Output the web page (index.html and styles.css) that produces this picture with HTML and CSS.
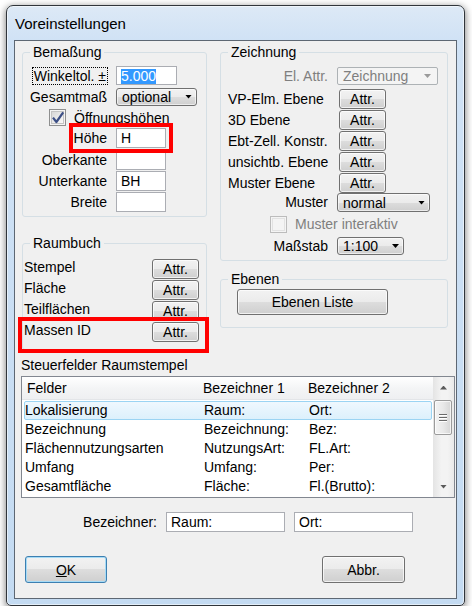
FILE: index.html
```html
<!DOCTYPE html>
<html lang="de">
<head>
<meta charset="utf-8">
<title>Voreinstellungen</title>
<link rel="stylesheet" href="styles.css">
</head>
<body>
<div class="window">
  <div class="titlebar">Voreinstellungen</div>
  <div class="client">
    <div class="top">
      <div class="col">
        <section class="group g-bem">
          <span class="gtitle">Bemaßung</span>
          <div class="row r21">
            <span class="lbl lbl-focus"><span class="focus">Winkeltol. ±</span></span>
            <div class="input w61 h19"><span class="selected">5.000</span></div>
          </div>
          <div class="row r21">
            <span class="lbl">Gesamtmaß</span>
            <div class="combo w81 h18"><span>optional</span><i class="arrow"></i></div>
          </div>
          <div class="row r21 chk-row">
            <svg class="chk" width="17" height="17" viewBox="0 0 17 17">
              <defs><linearGradient id="cg" x1="0" y1="0" x2="1" y2="1"><stop offset="0" stop-color="#d6d6d6"/><stop offset="1" stop-color="#fafafa"/></linearGradient></defs>
              <rect x="0.5" y="0.5" width="16" height="16" fill="#f4f4f4" stroke="#8e8f8f"/>
              <rect x="2.5" y="2.5" width="12" height="12" fill="url(#cg)" stroke="#c4c4c4"/>
              <path d="M4 8.6 L7.4 13 L14.2 3.4" fill="none" stroke="#3c4f86" stroke-width="2.2" stroke-linejoin="round"/>
            </svg>
            <span class="chk-lbl">Öffnungshöhen</span>
          </div>
          <div class="row r-in mark mark-hoehe">
            <span class="lbl">Höhe</span>
            <div class="input w50">H</div>
          </div>
          <div class="row r-in m2">
            <span class="lbl">Oberkante</span>
            <div class="input w50"></div>
          </div>
          <div class="row r-in m1">
            <span class="lbl">Unterkante</span>
            <div class="input w50">BH</div>
          </div>
          <div class="row r-in m1">
            <span class="lbl">Breite</span>
            <div class="input w50"></div>
          </div>
        </section>
        <section class="group g-raum">
          <span class="gtitle">Raumbuch</span>
          <div class="rrow"><span class="rlbl">Stempel</span><button class="btn attr">Attr.</button></div>
          <div class="rrow"><span class="rlbl">Fläche</span><button class="btn attr">Attr.</button></div>
          <div class="rrow"><span class="rlbl">Teilflächen</span><button class="btn attr">Attr.</button></div>
          <div class="rrow mark mark-massen"><span class="rlbl">Massen ID</span><button class="btn attr">Attr.</button></div>
        </section>
      </div>
      <div class="col">
        <section class="group g-zei">
          <span class="gtitle">Zeichnung</span>
          <div class="zrow z1">
            <span class="zlbl right dis">El. Attr.</span>
            <div class="combo disabled w101 h18"><span>Zeichnung</span><i class="arrow"></i></div>
          </div>
          <div class="zrow z21"><span class="zlbl">VP-Elm. Ebene</span><button class="btn attr zb">Attr.</button></div>
          <div class="zrow z21"><span class="zlbl">3D Ebene</span><button class="btn attr zb">Attr.</button></div>
          <div class="zrow z21"><span class="zlbl">Ebt-Zell. Konstr.</span><button class="btn attr zb">Attr.</button></div>
          <div class="zrow z21"><span class="zlbl">unsichtb. Ebene</span><button class="btn attr zb">Attr.</button></div>
          <div class="zrow z21"><span class="zlbl">Muster Ebene</span><button class="btn attr zb">Attr.</button></div>
          <div class="zrow z7">
            <span class="zlbl right">Muster</span>
            <div class="combo w93 h19"><span>normal</span><i class="arrow"></i></div>
          </div>
          <div class="zrow z8">
            <svg class="chk2" width="17" height="17" viewBox="0 0 17 17">
              <rect x="0.5" y="0.5" width="16" height="16" fill="#f4f4f4" stroke="#bcbcbc"/>
              <rect x="2.5" y="2.5" width="12" height="12" fill="#f4f4f4" stroke="#e2e2e2"/>
            </svg>
            <span class="chk-lbl dis">Muster interaktiv</span>
          </div>
          <div class="zrow z9">
            <span class="zlbl right">Maßstab</span>
            <div class="combo w67 h18"><span>1:100</span><i class="arrow"></i></div>
          </div>
        </section>
        <section class="group g-ebe">
          <span class="gtitle">Ebenen</span>
          <button class="btn ebenen">Ebenen Liste</button>
        </section>
      </div>
    </div>

    <div class="list-label">Steuerfelder Raumstempel</div>
    <div class="list">
      <div class="lv">
        <div class="lv-head"><span class="h1">Felder</span><span class="h2">Bezeichner 1</span><span class="h3">Bezeichner 2</span></div>
        <div class="lv-body">
          <div class="lv-row sel"><span class="c1">Lokalisierung</span><span class="c2">Raum:</span><span class="c3">Ort:</span></div>
          <div class="lv-row"><span class="c1">Bezeichnung</span><span class="c2">Bezeichnung:</span><span class="c3">Bez:</span></div>
          <div class="lv-row"><span class="c1">Flächennutzungsarten</span><span class="c2">NutzungsArt:</span><span class="c3">FL.Art:</span></div>
          <div class="lv-row"><span class="c1">Umfang</span><span class="c2">Umfang:</span><span class="c3">Per:</span></div>
          <div class="lv-row"><span class="c1">Gesamtfläche</span><span class="c2">Fläche:</span><span class="c3">Fl.(Brutto):</span></div>
        </div>
      </div>
      <div class="vscroll">
        <div class="sb-btn"><i class="sb-up"></i></div>
        <div class="sb-track">
          <div class="sb-thumb"><i></i><i></i><i></i></div>
        </div>
        <div class="sb-btn"><i class="sb-down"></i></div>
      </div>
    </div>

    <div class="bez">
      <span class="bez-lbl">Bezeichner:</span>
      <div class="input w119">Raum:</div>
      <div class="input w119 ort">Ort:</div>
    </div>

    <div class="dlg-buttons">
      <button class="btn default"><span class="ul">O</span>K</button>
      <button class="btn cancel">Abbr.</button>
    </div>
  </div>
</div>
</body>
</html>
```

FILE: styles.css
```css
html, body {
  margin: 0;
  padding: 0;
  background: #ffffff;
}

body {
  font-family: "Liberation Sans", Arial, sans-serif;
  font-size: 14px;
  color: #000;
}

.window {
  margin: 5px 0 0 6px;
  width: 459px;
  height: 601px;
  box-sizing: border-box;
  border: 1px solid #30353b;
  border-radius: 7px 7px 5px 5px;
  padding: 0 7px 6px 7px;
  background: linear-gradient(180deg, #dde9f6 0%, #d0e2f5 34px, #c4dbf2 100%);
  box-shadow: 0 2px 7px 1px rgba(0, 0, 0, 0.45), inset 0 0 0 1px rgba(255, 255, 255, 0.55);
  display: flex;
  flex-direction: column;
}

.titlebar {
  height: 34px;
  box-sizing: border-box;
  padding: 8px 0 0 1px;
  font-size: 15px;
  line-height: 20px;
}

.client {
  width: 443px;
  height: 559px;
  box-sizing: border-box;
  border: 1px solid #5d6773;
  background: #f0f0f0;
}

/* top area */
.top {
  display: grid;
  grid-template-columns: 185px 228px;
  column-gap: 13px;
  margin: 11px 0 0 7px;
  align-items: start;
}

.col {
  display: flex;
  flex-direction: column;
}

.group {
  position: relative;
  box-sizing: border-box;
  border: 1px solid #d5dfe5;
  border-radius: 3px;
}

.gtitle {
  position: absolute;
  top: -9px;
  left: 7px;
  padding: 0 3px;
  line-height: 16px;
  background: #f0f0f0;
}

.g-bem {
  height: 165px;
  padding-top: 12px;
}

.g-raum {
  height: 107px;
  margin-top: 26px;
  padding-top: 15px;
}

.g-zei {
  height: 209px;
  padding-top: 12px;
}

.g-ebe {
  height: 49px;
  margin-top: 18px;
  padding: 9px 0 0 16px;
}

/* Bemaßung rows */
.row {
  position: relative;
  display: flex;
  align-items: center;
}

.r21 { height: 21px; }
.r-in { height: 20px; }
.m1 { margin-top: 1px; }
.m2 { margin-top: 2px; }

.lbl {
  width: 85px;
  box-sizing: border-box;
  padding-right: 1px;
  margin-right: 8px;
  text-align: right;
  white-space: nowrap;
  line-height: 16px;
}

.lbl-focus {
  padding-right: 0;
}

.focus {
  display: inline-block;
  border: 1px dotted #000;
  padding: 0 1px;
  line-height: 16px;
}

.input {
  box-sizing: border-box;
  height: 20px;
  border: 1px solid #abadb3;
  background: #fff;
  padding: 0 4px;
  line-height: 18px;
  white-space: nowrap;
  overflow: hidden;
}

.h19 { height: 19px; line-height: 17px; }
.w50 { width: 50px; }
.w61 { width: 61px; }
.w119 { width: 119px; }

.selected {
  display: inline-block;
  background: #3399ff;
  color: #fff;
  line-height: 15px;
  vertical-align: middle;
}

.chk-row .chk {
  margin-left: 26px;
  flex: none;
}

.chk-lbl {
  margin-left: 8px;
  line-height: 16px;
  white-space: nowrap;
}

.dis {
  color: #7f7f7f;
}

/* combos */
.combo {
  display: flex;
  align-items: center;
  justify-content: space-between;
  box-sizing: border-box;
  border: 1px solid #707070;
  border-radius: 3px;
  background: linear-gradient(180deg, #f2f2f2 0%, #ebebeb 50%, #dddddd 50%, #cfcfcf 100%);
  box-shadow: inset 0 0 0 1px rgba(255, 255, 255, 0.6);
  padding: 0 4px 0 5px;
  white-space: nowrap;
  line-height: 16px;
}

.combo.disabled {
  border-color: #adb2b5;
  background: #f4f4f4;
  box-shadow: none;
  border-radius: 2px;
  color: #7f7f7f;
  padding-right: 6px;
}

.combo.disabled .arrow {
  background: #9a9a9a;
}

.h18 { height: 18px; }
.h19 { height: 19px; }
.w67 { width: 67px; }
.w81 { width: 81px; }
.w93 { width: 93px; }
.w101 { width: 101px; }

.arrow {
  display: block;
  width: 7px;
  height: 4px;
  background: #000;
  clip-path: polygon(0 0, 100% 0, 50% 100%);
  flex: none;
}

/* buttons */
.btn {
  display: flex;
  align-items: center;
  justify-content: center;
  box-sizing: border-box;
  margin: 0;
  padding: 0;
  border: 1px solid #707070;
  border-radius: 3px;
  background: linear-gradient(180deg, #f2f2f2 0%, #ebebeb 50%, #dddddd 50%, #cfcfcf 100%);
  box-shadow: inset 0 0 0 1px rgba(255, 255, 255, 0.7);
  font-family: "Liberation Sans", Arial, sans-serif;
  font-size: 14px;
  color: #000;
  line-height: 16px;
}

.attr {
  width: 47px;
  height: 20px;
  flex: none;
}

.ebenen {
  width: 151px;
  height: 26px;
}

/* Raumbuch rows */
.rrow {
  position: relative;
  display: flex;
  align-items: flex-start;
  height: 21px;
}

.rlbl {
  width: 128px;
  padding-left: 1px;
  line-height: 17px;
  white-space: nowrap;
}

/* Zeichnung rows */
.zrow {
  display: flex;
  align-items: flex-end;
}

.z1 {
  height: 23px;
  align-items: flex-start;
  padding-top: 2px;
  box-sizing: border-box;
}

.z1 .zlbl { line-height: 18px; }

.z21 { height: 21px; }

.z7 {
  height: 20px;
  align-items: flex-start;
}

.z7 .zlbl { line-height: 19px; }

.z8 {
  height: 22px;
  align-items: center;
}

.z8 .chk2 {
  margin-left: 49px;
  flex: none;
}

.z9 {
  height: 22px;
  align-items: center;
}

.z9 .zlbl { line-height: 18px; }

.zlbl {
  width: 107px;
  box-sizing: border-box;
  padding-left: 7px;
  margin-right: 9px;
  white-space: nowrap;
  line-height: 20px;
}

.zlbl.right {
  padding-left: 0;
  text-align: right;
}

.zb {
  margin-left: 2px;
}

/* red annotation marks */
.mark::after {
  content: "";
  position: absolute;
  box-sizing: border-box;
  border: 4px solid #ff0000;
  pointer-events: none;
  z-index: 2;
}

.mark-hoehe::after {
  left: 46px;
  top: -5px;
  width: 104px;
  height: 30px;
}

.mark-massen::after {
  left: -5px;
  top: -5px;
  width: 191px;
  height: 36px;
}

/* list */
.list-label {
  margin: 7px 0 0 6px;
  line-height: 16px;
}

.list {
  display: flex;
  margin: 3px 0 0 6px;
  width: 434px;
  height: 122px;
  box-sizing: border-box;
  border: 1px solid #828790;
  background: #fff;
}

.lv {
  flex: 1;
  min-width: 0;
}

.lv-head {
  display: flex;
  height: 23px;
  box-sizing: border-box;
  border-bottom: 1px solid #e3e5e8;
  background: linear-gradient(180deg, #ffffff 0%, #f4f5f6 50%, #eeeff1 100%);
  line-height: 22px;
}

.lv-head span {
  box-sizing: border-box;
  padding-left: 5px;
  white-space: nowrap;
}

.h1 { width: 176px; }
.h2 { width: 105px; }

.lv-body {
  padding-top: 1px;
}

.lv-row {
  display: flex;
  height: 19px;
  box-sizing: border-box;
  margin: 0 1px 0 2px;
  border: 1px solid transparent;
  border-radius: 2px;
  line-height: 17px;
  white-space: nowrap;
}

.lv-row.sel {
  border-color: #9bd4f3;
  background: linear-gradient(180deg, #eff8fe 0%, #dcf0fc 100%);
}

.c1 { width: 179px; }
.c2 { width: 105px; }

.vscroll {
  width: 21px;
  display: flex;
  flex-direction: column;
  background: linear-gradient(90deg, #e4e4e4 0%, #f3f3f3 40%, #f3f3f3 70%, #e9e9e9 100%);
}

.sb-btn {
  height: 21px;
  display: flex;
  align-items: center;
  justify-content: center;
  flex: none;
}

.sb-up, .sb-down {
  display: block;
  width: 7px;
  height: 4px;
  background: #5b5b5b;
}

.sb-up { clip-path: polygon(50% 0, 100% 100%, 0 100%); }
.sb-down { clip-path: polygon(0 0, 100% 0, 50% 100%); }

.sb-track {
  flex: 1;
  padding-top: 2px;
}

.sb-thumb {
  box-sizing: border-box;
  margin: 0 2px 0 1px;
  height: 35px;
  border: 1px solid #9b9b9b;
  border-radius: 2px;
  background: linear-gradient(90deg, #f3f3f3 0%, #e9e9e9 50%, #d6d6d6 100%);
  box-shadow: inset 0 0 0 1px rgba(255, 255, 255, 0.7);
  display: flex;
  flex-direction: column;
  align-items: center;
  justify-content: center;
  gap: 2px;
}

.sb-thumb i {
  display: block;
  width: 8px;
  height: 1px;
  background: #6a6a6a;
  box-shadow: 0 1px 0 #ffffff;
}

/* Bezeichner row */
.bez {
  display: flex;
  align-items: center;
  height: 20px;
  margin-top: 14px;
}

.bez-lbl {
  width: 142px;
  text-align: right;
  margin-right: 9px;
  line-height: 16px;
}

.ort {
  margin-left: 9px;
}

/* dialog buttons */
.dlg-buttons {
  display: flex;
  margin-top: 24px;
  padding-left: 10px;
}

.dlg-buttons .btn {
  width: 82px;
  height: 27px;
}

.btn.default {
  border-color: #3c7fb1;
  box-shadow: inset 0 0 0 1px #a6dbf6;
}

.btn.cancel {
  width: 83px;
  margin-left: 215px;
}

.ul {
  text-decoration: underline;
}
```
